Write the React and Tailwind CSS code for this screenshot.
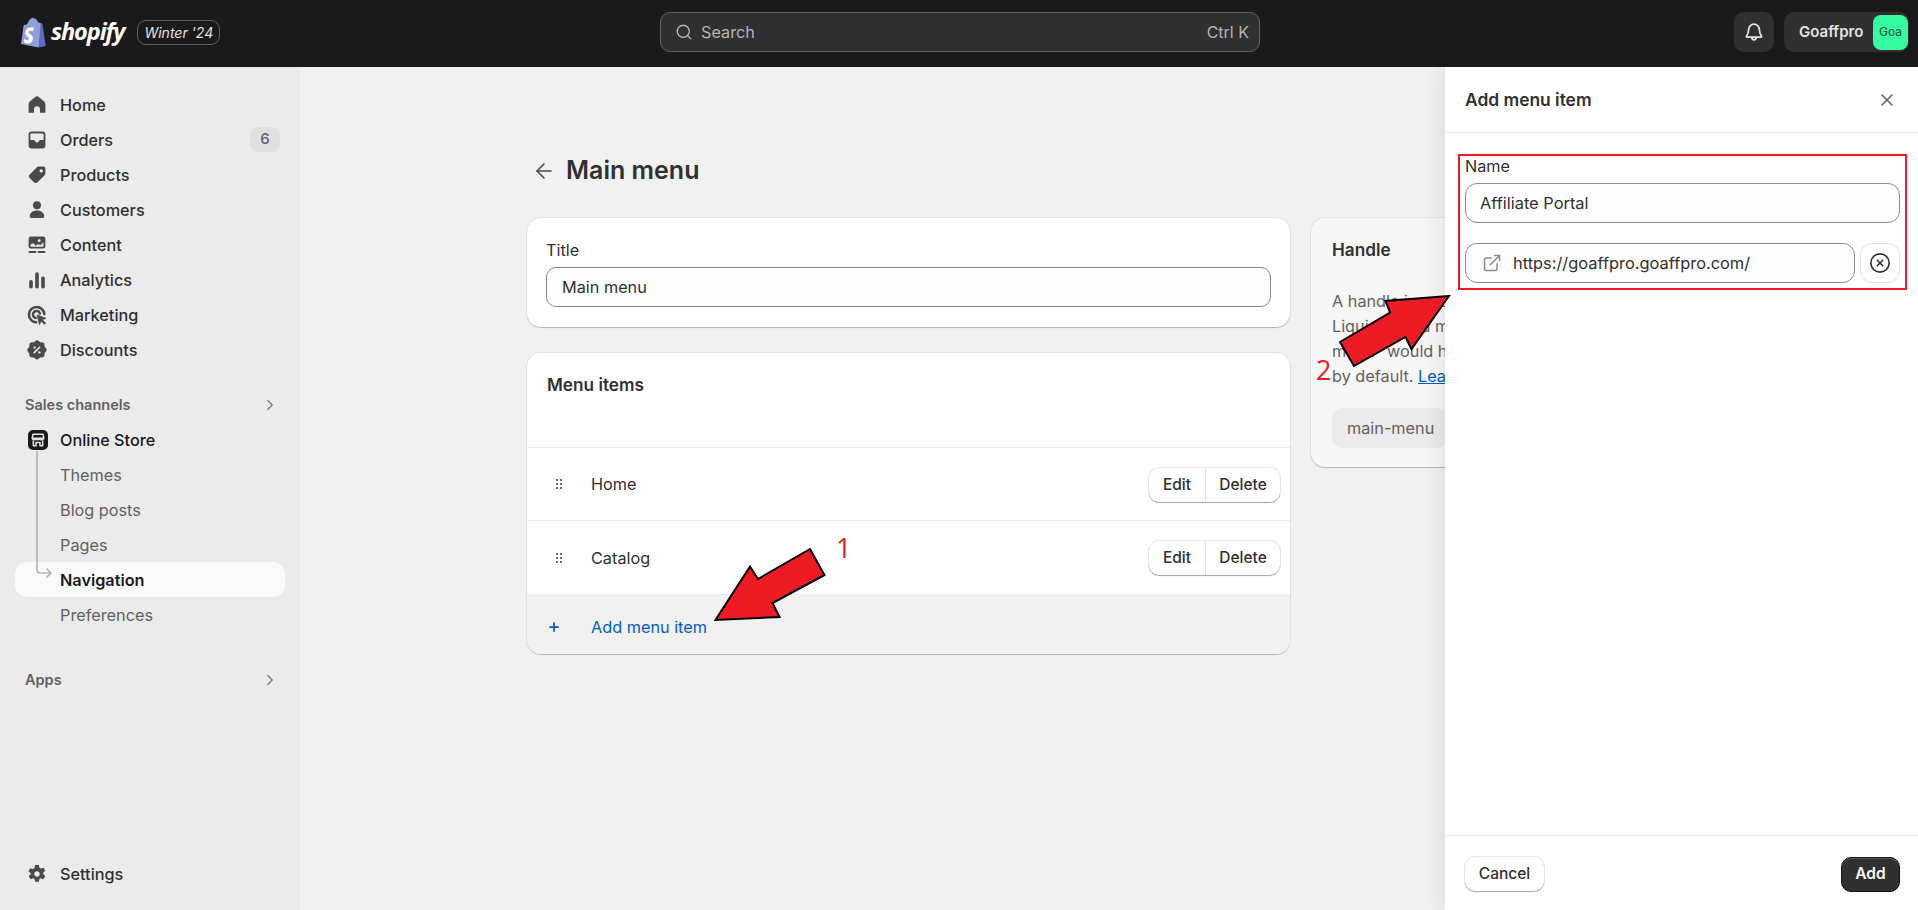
import { ArrowLeft, ChevronRight, CircleX, ExternalLink, Plus, Search, X } from "lucide-react";

// polaris style filled icons, 20x20 box
const HomeIcon = () => (
  <svg viewBox="0 0 20 20" className="w-6 h-6 fill-[#4a4a4a]">
    <path d="M8.500 3.400a2.400 2.400 0 0 1 3 0l4.200 3.400c.8.600 1.300 1.600 1.300 2.600V16.500h-4.500v-3a2.500 2.500 0 0 0-5 0v3H3V9.400c0-1 .5-2 1.300-2.600z" />
  </svg>
);
const OrdersIcon = () => (
  <svg viewBox="0 0 20 20" className="w-6 h-6 fill-[#4a4a4a]">
    <path fillRule="evenodd" d="M5.500 3h9A2.500 2.500 0 0 1 17 5.500v9a2.500 2.500 0 0 1-2.500 2.500h-9A2.500 2.500 0 0 1 3 14.500v-9A2.500 2.500 0 0 1 5.500 3zm0 1.500a1 1 0 0 0-1 1V10h2.600c.5 0 .9.300 1.100.7.300.8 1 1.300 1.800 1.300s1.500-.5 1.800-1.300c.2-.4.6-.7 1.100-.7h2.600V5.500a1 1 0 0 0-1-1z" />
  </svg>
);
const ProductsIcon = () => (
  <svg viewBox="0 0 20 20" className="w-6 h-6 fill-[#4a4a4a]">
    <path fillRule="evenodd" d="M11.600 3H15a2 2 0 0 1 2 2v3.400c0 .8-.3 1.500-.9 2.100l-5.400 5.400a2.400 2.400 0 0 1-3.400 0l-3.200-3.200a2.400 2.400 0 0 1 0-3.400l5.400-5.400c.6-.6 1.300-.9 2.100-.9zM13.500 8a1.400 1.400 0 1 0 0-2.800 1.400 1.400 0 0 0 0 2.800z" />
  </svg>
);
const CustomersIcon = () => (
  <svg viewBox="0 0 20 20" className="w-6 h-6 fill-[#4a4a4a]">
    <circle cx="10" cy="6" r="3.300" />
    <path d="M10 10.500c-3.300 0-5.600 1.800-6 4.300-.2 1.200.6 1.900 1.600 1.900h8.800c1 0 1.800-.7 1.600-1.900-.4-2.500-2.700-4.300-6-4.300z" />
  </svg>
);
const ContentIcon = () => (
  <svg viewBox="0 0 20 20" className="w-6 h-6 fill-[#4a4a4a]">
    <path fillRule="evenodd" d="M5 3h10a2 2 0 0 1 2 2v6a2 2 0 0 1-2 2H5a2 2 0 0 1-2-2V5a2 2 0 0 1 2-2zm6.800 2.200a1.200 1.200 0 1 0 0 2.400 1.200 1.200 0 0 0 0-2.400zM4.600 9.600v1.400c0 .3.200.5.400.500h10c.2 0 .4-.2.400-.5V7.800l-2.200 2.300-2.700-.8-1.500 1.400-2.100-2.200z" />
    <rect x="3" y="15" width="6.500" height="1.600" rx=".8" />
    <rect x="10.500" y="15" width="6.500" height="1.600" rx=".8" />
  </svg>
);
const AnalyticsIcon = () => (
  <svg viewBox="0 0 20 20" className="w-6 h-6 fill-[#4a4a4a]">
    <rect x="3.500" y="10" width="3" height="7" rx="1.400" />
    <rect x="8.500" y="3.500" width="3" height="13.500" rx="1.400" />
    <rect x="13.500" y="7" width="3" height="10" rx="1.400" />
  </svg>
);
const MarketingIcon = () => (
  <svg viewBox="0 0 20 20" className="w-6 h-6 fill-none stroke-[#4a4a4a]">
    <path d="M9.300 16.100a6.400 6.400 0 1 1 6.800-6.800" strokeWidth="2.100" strokeLinecap="round" />
    <path d="M8.800 12.500a3 3 0 1 1 3.700-3.700" strokeWidth="2.100" strokeLinecap="round" />
    <path d="M10 10l7.500 2.700-3 1.300 2.700 2.700-1.100 1.100-2.700-2.700-1.300 3z" className="fill-[#4a4a4a]" strokeWidth=".6" strokeLinejoin="round" />
  </svg>
);
const DiscountsIcon = () => (
  <svg viewBox="0 0 20 20" className="w-6 h-6 fill-[#4a4a4a]">
    <path fillRule="evenodd" d="M8.300 2.700a2.400 2.400 0 0 1 3.400 0l.6.6c.2.200.4.300.7.300h.9A2.400 2.400 0 0 1 16.300 6v.9c0 .3.100.5.300.7l.6.6a2.400 2.400 0 0 1 0 3.400l-.6.6c-.2.200-.3.400-.3.700v.9a2.400 2.400 0 0 1-2.400 2.400H13c-.3 0-.5.100-.7.300l-.6.6a2.400 2.400 0 0 1-3.400 0l-.6-.6a1 1 0 0 0-.7-.3H6A2.400 2.400 0 0 1 3.600 14v-.9c0-.3-.1-.5-.3-.7l-.6-.6a2.400 2.400 0 0 1 0-3.400l.6-.6c.2-.2.300-.4.300-.7V6A2.400 2.400 0 0 1 6 3.600h.9c.3 0 .5-.1.700-.3zM8 9a1 1 0 1 0 0-2 1 1 0 0 0 0 2zm4 4a1 1 0 1 0 0-2 1 1 0 0 0 0 2zm.7-5.700a.7.700 0 0 0-1-.1l-4.500 4.500a.7.700 0 1 0 1 1l4.500-4.500a.7.700 0 0 0 0-.9z" />
  </svg>
);
const SettingsIcon = () => (
  <svg viewBox="0 0 20 20" className="w-6 h-6 fill-[#4a4a4a]">
    <path fillRule="evenodd" d="M8.500 2.500h3l.5 2.200 1.200.7 2.200-.7 1.500 2.600-1.700 1.500v1.400l1.700 1.500-1.500 2.600-2.200-.7-1.200.7-.5 2.200h-3l-.5-2.200-1.200-.7-2.200.7-1.500-2.600 1.700-1.500V9.300L2.900 7.800l1.500-2.600 2.200.7 1.200-.7zM10 12.200a2.200 2.200 0 1 0 0-4.400 2.200 2.200 0 0 0 0 4.400z" />
  </svg>
);
const StoreIcon = () => (
  <span className="w-5 h-5 rounded-[5px] bg-[#1a1a1a] flex items-center justify-center">
    <svg viewBox="0 0 20 20" className="w-[18px] h-[18px] fill-none stroke-[#e3e3e3]" strokeWidth="1.700" strokeLinejoin="round">
      <path d="M4.500 3.500h11l1 4.500H3.500z" />
      <path d="M3.800 8.300c.3 1.900 3.700 1.900 4.100 0 .3 1.900 3.900 1.900 4.200 0 .4 1.900 3.800 1.900 4.100 0" />
      <path d="M4.800 10.500v6h3v-3.800h4.400v3.800h3v-6" />
    </svg>
  </span>
);
const BellIcon = () => (
  <svg viewBox="0 0 20 20" className="w-6 h-6 fill-none stroke-[#e3e3e3]" strokeWidth="1.500" strokeLinejoin="round" strokeLinecap="round">
    <path d="M5.500 8a4.500 4.500 0 0 1 9 0c0 3 .6 4.100 1.700 5.400.3.300.1.800-.3.800H4.100c-.4 0-.6-.5-.3-.8C4.900 12.100 5.500 11 5.500 8z" />
    <path d="M8.200 14.400c0 1.400.8 2.100 1.800 2.100s1.800-.7 1.800-2.100" />
  </svg>
);

const LogoBag = () => (
  <svg viewBox="0 0 26 30" className="w-[26px] h-[31px]">
    <path d="M20.500 5.500 18 4.800C17.400 2.500 16 1 14.300.9c-.3-.4-.6-.6-1-.6C9.900.3 8 4.500 7.400 6.700L4.500 7.600c-.8.300-.9.300-1 1.100L1 26.500 18.700 30 21.500 6c0-.3-.5-.4-1-.5z" fill="#8e9fdc" />
    <path d="M20.500 5.500 18.700 30l7-1.600L22.300 6.200c-.1-.4-.9-.6-1.800-.7z" fill="#5e6fc0" />
    <path d="M14 10.800l-1 3.100s-1.100-.6-2.400-.6c-1.900 0-2 1.200-2 1.500 0 1.700 4.300 2.300 4.300 6.200 0 3.100-2 5-4.600 5-3.200 0-4.800-2-4.800-2l.9-2.800s1.700 1.400 3.100 1.400c.9 0 1.300-.7 1.300-1.300 0-2.100-3.500-2.200-3.500-5.700 0-2.900 2.100-5.800 6.300-5.800 1.600 0 2.400.5 2.400.5z" fill="#fff" />
  </svg>
);

const NavRow = ({ icon, label, badge }) => (
  <div className="h-[35px] flex items-center rounded-[10px]">
    <span className="w-[45px] pl-[10px] flex items-center">{icon}</span>
    <span className="flex-1 pt-[2px] text-[16.25px] font-medium text-[#303030]">{label}</span>
    {badge && (
      <span className="mr-[5px] w-[30px] h-[25px] rounded-lg bg-[#e0e0e0] text-[#616161] text-[15px] font-medium flex items-center justify-center">
        {badge}
      </span>
    )}
  </div>
);

const SectionRow = ({ label }) => (
  <div className="h-[35px] flex items-center justify-between pl-[10px] pr-[6px]">
    <span className="text-[14.5px] font-semibold text-[#616161]">{label}</span>
    <ChevronRight className="w-[18px] h-[18px] text-[#707070]" strokeWidth={1.5} />
  </div>
);

const SubRow = ({ label, active }) => (
  <div className={`h-[35px] flex items-center pl-[45px] pt-[2px] rounded-[12px] text-[16.25px] ${active ? "bg-[#fafafa] font-semibold text-[#1a1a1a]" : "font-normal text-[#616161]"}`}>
    {label}
  </div>
);

const Sidebar = () => (
  <aside className="w-[300px] shrink-0 bg-[#ebebeb] flex flex-col px-[15px] pt-[20px] pb-[19px]">
    <NavRow icon={<HomeIcon />} label="Home" />
    <NavRow icon={<OrdersIcon />} label="Orders" badge="6" />
    <NavRow icon={<ProductsIcon />} label="Products" />
    <NavRow icon={<CustomersIcon />} label="Customers" />
    <NavRow icon={<ContentIcon />} label="Content" />
    <NavRow icon={<AnalyticsIcon />} label="Analytics" />
    <NavRow icon={<MarketingIcon />} label="Marketing" />
    <NavRow icon={<DiscountsIcon />} label="Discounts" />
    <div className="mt-[20px]">
      <SectionRow label="Sales channels" />
    </div>
    <div className="h-[35px] flex items-center pl-[13px]">
      <span className="w-[32px]"><StoreIcon /></span>
      <span className="pt-[2px] text-[16.25px] font-medium text-[#1a1a1a]">Online Store</span>
    </div>
    <div className="relative">
      <SubRow label="Themes" />
      <SubRow label="Blog posts" />
      <SubRow label="Pages" />
      <SubRow label="Navigation" active />
      <SubRow label="Preferences" />
      <svg className="absolute left-[20px] top-[-6px] w-[20px] h-[135px] fill-none stroke-[#b5b5b5]" strokeWidth="1.700">
        <path d="M2 0v119a3 3 0 0 0 3 3h11M11.500 117.500l4.500 4.500-4.500 4.500" />
      </svg>
    </div>
    <div className="mt-[30px]">
      <SectionRow label="Apps" />
    </div>
    <div className="flex-1" />
    <NavRow icon={<SettingsIcon />} label="Settings" />
  </aside>
);

const Card = ({ className, children }) => (
  <div className={`rounded-[14px] shadow-[0_0_0_1px_rgba(0,0,0,0.05),0_1px_1px_rgba(0,0,0,0.2)] ${className}`}>
    {children}
  </div>
);

const DragDots = () => (
  <svg viewBox="0 0 6 10" className="w-[6px] h-[10px] fill-[#707070]">
    <rect x="0" y="0" width="2" height="2" />
    <rect x="4" y="0" width="2" height="2" />
    <rect x="0" y="4" width="2" height="2" />
    <rect x="4" y="4" width="2" height="2" />
    <rect x="0" y="8" width="2" height="2" />
    <rect x="4" y="8" width="2" height="2" />
  </svg>
);

const MenuRow = ({ label, className, labelClass, buttonClass }) => (
  <div className={`flex items-center border-t border-[#ebebeb] pl-[29px] pr-[10px] ${className}`}>
    <span className="w-[35px]"><DragDots /></span>
    <span className={`flex-1 text-[16.25px] text-[#303030] ${labelClass}`}>{label}</span>
    <div className={`h-[34px] flex rounded-[10px] bg-white shadow-[0_0_0_1px_rgba(0,0,0,0.08),0_1px_1px_rgba(0,0,0,0.3)] text-[15.5px] font-medium text-[#303030] ${buttonClass}`}>
      <span className="w-[57px] flex items-center justify-center border-r border-[#e3e3e3]">Edit</span>
      <span className="w-[74px] flex items-center justify-center">Delete</span>
    </div>
  </div>
);

const Page = () => (
  <main className="flex-1 min-w-0 bg-[#f1f1f1] pl-[227px] pt-[84px] overflow-hidden">
    <div className="h-10 flex items-center mb-[27px]">
      <ArrowLeft className="ml-[5px] w-6 h-6 text-[#4a4a4a]" strokeWidth={1.6} />
      <h1 className="ml-[10px] text-[25px] font-semibold text-[#303030]">Main menu</h1>
    </div>
    <div className="flex gap-[21px] items-start w-[1165px]">
      <div className="w-[763px] shrink-0 flex flex-col gap-[26px]">
        <Card className="bg-white h-[109px] px-[19px] pt-[21px]">
          <div className="text-[16.25px] leading-[22px] text-[#303030]">Title</div>
          <div className="mt-[6px] h-10 rounded-[10px] border border-[#8a8a8a] bg-[#fdfdfd] flex items-center px-[15px] text-[16.25px] text-[#303030]">
            Main menu
          </div>
        </Card>
        <Card className="bg-white overflow-hidden">
          <div className="h-[94px] px-[20px] pt-[21px] text-[17.2px] leading-[22px] font-semibold text-[#303030]">Menu items</div>
          <MenuRow label="Home" className="h-[73px]" buttonClass="mt-[2px]" />
          <MenuRow label="Catalog" className="h-[74px]" labelClass="pt-[2px]" />
          <div className="h-[60px] bg-[#f1f1f1] border-t border-[#ebebeb] flex items-center pl-[20px] pt-[5px] text-[16.25px] text-[#005bd3]">
            <Plus className="w-[14px] h-[14px]" strokeWidth={3} />
            <span className="ml-[30px]">Add menu item</span>
          </div>
        </Card>
      </div>
      <Card className="flex-1 h-[249px] bg-[#f7f7f7] pl-[21px] pr-[20px] pt-[21px]">
        <div className="text-[17.2px] leading-[22px] font-semibold text-[#303030]">Handle</div>
        <p className="mt-[28px] text-[16.25px] leading-[25px] text-[#616161]">
          A handle is used to reference a menu in
          <br />
          Liquid. e.g. a menu with the title "Sidebar
          <br />
          menu" would have the handle sidebar-menu
          <br />
          by default. <span className="text-[#005bd3] underline">Learn more</span>
        </p>
        <div className="mt-[19px] h-10 w-fit rounded-[10px] bg-[#ebebeb] px-[15px] flex items-center text-[16.25px] text-[#616161]">
          main-menu
        </div>
      </Card>
    </div>
  </main>
);

const AddPanel = () => (
  <section className="absolute top-[67px] right-0 bottom-0 w-[473px] bg-white flex flex-col shadow-[-6px_0_20px_rgba(0,0,0,0.08)]">
    <div className="h-[66px] shrink-0 border-b border-[#ebebeb] flex items-center justify-between pl-[20px] pr-[21px] pt-[1px]">
      <h2 className="text-[17.4px] font-semibold text-[#303030]">Add menu item</h2>
      <X className="w-[20px] h-[20px] text-[#616161]" strokeWidth={1.8} />
    </div>
    <div className="flex-1 pl-[13px] pr-[11px] pt-[21px]">
      <div className="border-2 border-[#ed1c24] pl-[5px] pr-[5px] pb-[5px]">
        <div className="h-[27px] leading-[21px] text-[16.25px] text-[#303030]">Name</div>
        <div className="h-10 rounded-[12px] border border-[#8a8a8a] bg-[#fdfdfd] flex items-center px-[14px] text-[16.4px] text-[#303030]">
          Affiliate Portal
        </div>
        <div className="mt-5 flex gap-[5px]">
          <div className="flex-1 h-10 rounded-[12px] border border-[#8a8a8a] bg-[#fdfdfd] flex items-center pl-[16px] text-[16.4px] text-[#303030]">
            <ExternalLink className="w-[20px] h-[20px] text-[#8a8a8a]" strokeWidth={1.8} />
            <span className="ml-[11px]">https://goaffpro.goaffpro.com/</span>
          </div>
          <div className="w-10 h-10 rounded-[12px] border border-[#e3e3e3] flex items-center justify-center">
            <CircleX className="w-[22px] h-[22px] text-[#303030]" strokeWidth={1.8} />
          </div>
        </div>
      </div>
    </div>
    <div className="h-[75px] shrink-0 border-t border-[#ebebeb] flex items-center justify-between pl-[20px] pr-[18px] pt-[2px]">
      <button className="w-[79px] h-[34px] rounded-[10px] bg-white shadow-[0_0_0_1px_rgba(0,0,0,0.08),0_1px_1px_rgba(0,0,0,0.3)] text-[15.5px] font-medium text-[#303030]">
        Cancel
      </button>
      <button className="w-[59px] h-[35px] rounded-[10px] bg-[#303030] border border-[#111] shadow-[inset_0_1px_0_rgba(255,255,255,0.2)] text-[15.5px] font-semibold text-white">
        Add
      </button>
    </div>
  </section>
);

const TopBar = () => (
  <header className="h-[67px] shrink-0 bg-[#1a1a1a] flex items-center pl-[20px] pr-[9px] pb-[3px]">
    <div className="w-[640px] flex items-center">
      <LogoBag />
      <span className="ml-[5px] text-[23.5px] leading-none font-bold italic text-white tracking-[-1.1px] font-['Open_Sans',sans-serif]">shopify</span>
      <span className="ml-[13px] h-[25px] w-[83px] rounded-[9px] border border-[#616161] flex items-center justify-center text-[14px] italic text-[#e3e3e3]">
        Winter '24
      </span>
    </div>
    <div className="w-[600px] h-10 rounded-[10px] border border-[#616161] bg-[#303030] flex items-center pl-[14px] pr-[10px] text-[16.25px] text-[#b5b5b5]">
      <Search className="w-[18px] h-[18px]" strokeWidth={1.8} />
      <span className="ml-[8px] flex-1">Search</span>
      <span className="text-[16px]">Ctrl K</span>
    </div>
    <div className="ml-auto flex items-center gap-[10px]">
      <div className="w-10 h-10 rounded-[10px] bg-[#303030] flex items-center justify-center">
        <BellIcon />
      </div>
      <div className="w-[125px] h-10 rounded-[10px] bg-[#303030] flex items-center justify-between pl-[15px] pr-[1px]">
        <span className="text-[15px] font-semibold text-[#e3e3e3]">Goaffpro</span>
        <span className="w-[35px] h-[35px] rounded-[8px] bg-[#36fba1] flex items-center justify-center text-[12px] text-[#0c5132]">Goa</span>
      </div>
    </div>
  </header>
);

const Annotations = () => (
  <>
    <svg className="absolute inset-0 w-[1918px] h-[910px] pointer-events-none" viewBox="0 0 1918 910">
      <polygon points="810,549 824.500,575 772.500,603 779.500,617 715.500,620 750,566.500 758,579" fill="#ed1c24" stroke="#000" strokeWidth="2" />
      <polygon points="1449,296 1385.500,301 1390,312.500 1340,342 1354,366 1405.500,337 1411.500,349" fill="#ed1c24" stroke="#000" strokeWidth="2" />
    </svg>
    <span className="absolute left-[836px] top-[530px] text-[27px] leading-[36px] text-[#ed1c24] font-['Open_Sans',sans-serif]">1</span>
    <span className="absolute left-[1316px] top-[352px] text-[27px] leading-[36px] text-[#ed1c24] font-['Open_Sans',sans-serif]">2</span>
  </>
);

const App = () => (
  <div className="relative w-[1918px] h-[910px] overflow-hidden flex flex-col font-['Inter',sans-serif]">
    <TopBar />
    <div className="flex-1 min-h-0 flex">
      <Sidebar />
      <Page />
    </div>
    <AddPanel />
    <Annotations />
  </div>
);

export default App;
